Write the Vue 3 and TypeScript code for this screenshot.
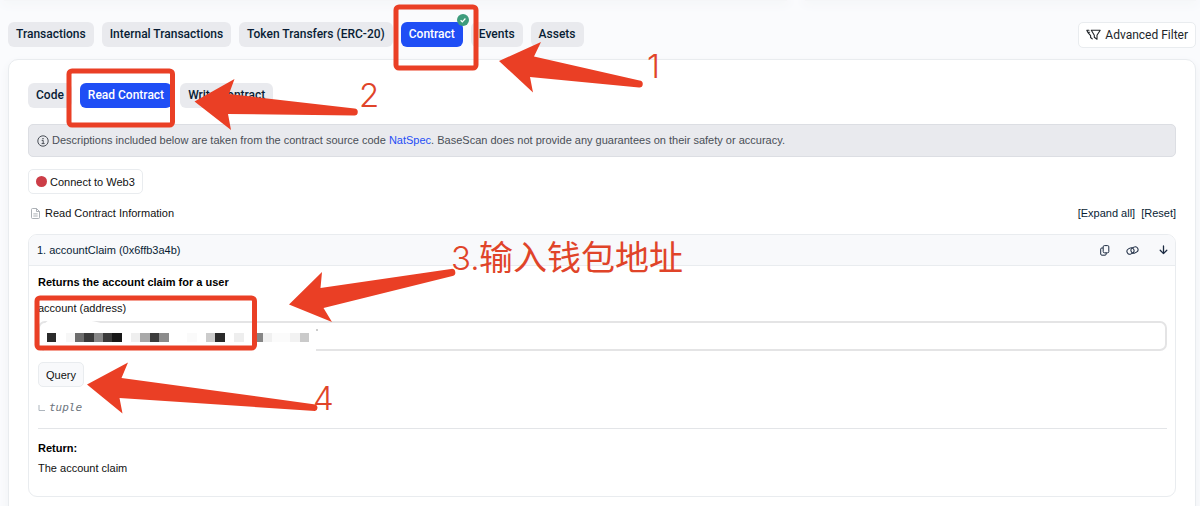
<script setup lang="ts">
import { ref } from 'vue'

interface Tab { label: string; active?: boolean; verified?: boolean }

const tabs: Tab[] = [
  { label: 'Transactions' },
  { label: 'Internal Transactions' },
  { label: 'Token Transfers (ERC-20)' },
  { label: 'Contract', active: true, verified: true },
  { label: 'Events' },
  { label: 'Assets' },
]
const subTabs: Tab[] = [
  { label: 'Code' },
  { label: 'Read Contract', active: true },
  { label: 'Write Contract' },
]
const account = ref('')

const mosaic: { x: number; w: number; c: string }[] = [
  { x: 47, w: 9, c: '#2b2b2b' },
  { x: 66, w: 9, c: '#f7f7f7' },
  { x: 75, w: 9, c: '#6c6c6c' },
  { x: 84, w: 10, c: '#3a3a3a' },
  { x: 94, w: 9, c: '#878787' },
  { x: 103, w: 9, c: '#3a3a3a' },
  { x: 112, w: 10, c: '#181818' },
  { x: 131, w: 9, c: '#efefef' },
  { x: 140, w: 10, c: '#a8a8a8' },
  { x: 150, w: 9, c: '#3c3c3c' },
  { x: 159, w: 10, c: '#8c8c8c' },
  { x: 187, w: 10, c: '#fafafa' },
  { x: 206, w: 9, c: '#cccccc' },
  { x: 215, w: 10, c: '#2b2b2b' },
  { x: 234, w: 10, c: '#eeeeee' },
  { x: 253, w: 10, c: '#858585' },
  { x: 263, w: 9, c: '#f0f0f0' },
  { x: 272, w: 18, c: '#fbfbfb' },
  { x: 290, w: 10, c: '#f2f2f2' },
  { x: 300, w: 9, c: '#cacaca' },
]
</script>

<template>
  <div class="page">
    <div class="above"><div class="sheet left"></div><div class="sheet right"></div></div>

    <header class="bar">
      <nav class="tabs">
        <button v-for="t in tabs" :key="t.label" type="button" class="tab" :class="{ active: t.active }">
          {{ t.label }}
          <svg v-if="t.verified" class="badge" viewBox="0 0 12 12" aria-hidden="true">
            <circle cx="6" cy="6" r="6" fill="#3d9c7c" />
            <path d="M3.6 6.2l1.7 1.6 3.1-3.3" fill="none" stroke="#fff" stroke-width="1.2" />
          </svg>
        </button>
      </nav>
      <button type="button" class="filter">
        <svg width="15" height="12" viewBox="0 0 15 12" fill="none" stroke="#212529" stroke-width="1.1" stroke-linejoin="round" stroke-linecap="round" aria-hidden="true">
          <path d="M5.300 1.300h8.900l-3.200 5v4L8.300 8.300V6.300z" />
          <path d="M3 1.300H.8l1 2h1.800M2 3.600l2.600 3v1.900l1.600 1.300" />
        </svg>
        Advanced Filter
      </button>
    </header>

    <main class="card">
      <nav class="tabs">
        <button v-for="t in subTabs" :key="t.label" type="button" class="tab" :class="{ active: t.active }">{{ t.label }}</button>
      </nav>

      <p class="notice">
        <svg width="12" height="12" viewBox="0 0 12 12" fill="none" stroke="#4a4f57" aria-hidden="true">
          <circle cx="6" cy="6" r="5.2" />
          <path d="M4.7 5.4h1.5v3M4.6 8.6h3" />
          <path d="M6 2.9v1.3" stroke-width="1.3" />
        </svg>
        <span>Descriptions included below are taken from the contract source code <a href="#">NatSpec</a>. BaseScan does not provide any guarantees on their safety or accuracy.</span>
      </p>

      <button type="button" class="connect"><i class="dot"></i>Connect to Web3</button>

      <div class="info">
        <h2>
          <svg width="9" height="11" viewBox="0 0 9 11" fill="none" stroke="#a3a8ae" stroke-width="0.9" aria-hidden="true">
            <path d="M1.5.5h4l3 3v6a1 1 0 0 1-1 1h-6a1 1 0 0 1-1-1v-8a1 1 0 0 1 1-1zM5.5.5v3h3M2.3 5.9h4.4M2.3 8h4.4" />
          </svg>
          Read Contract Information
        </h2>
        <div class="links"><a href="#">[Expand all]</a><a href="#">[Reset]</a></div>
      </div>

      <section class="method">
        <div class="method-head">
          <h3>1. accountClaim (0x6ffb3a4b)</h3>
          <div class="tools">
            <button type="button" aria-label="Copy">
              <svg width="10" height="11" viewBox="0 0 10 11" fill="none" stroke="#1b2a41" stroke-linejoin="round">
                <rect x="3.2" y=".6" width="5.6" height="7.2" rx="1.2" />
                <path d="M3 3H1.8A1.1 1.1 0 0 0 .7 4.100v4.900a1.200 1.200 0 0 0 1.200 1.200H5A1.200 1.200 0 0 0 6.200 9V8" />
              </svg>
            </button>
            <button type="button" aria-label="Permalink">
              <svg width="13" height="11" viewBox="0 0 13 11" fill="none" stroke="#1b2a41">
                <rect x=".9" y="3.200" width="7.200" height="5.600" rx="2.800" transform="rotate(-28 4.500 6)" />
                <rect x="4.900" y="2.200" width="7.200" height="5.600" rx="2.800" transform="rotate(-28 8.500 5)" />
              </svg>
            </button>
            <button type="button" class="toggle" aria-label="Toggle">
              <svg width="9" height="10" viewBox="0 0 9 10" fill="none" stroke="#1b2a41" stroke-width="1.3" stroke-linecap="round" stroke-linejoin="round">
                <path d="M4.500 1v7.500M1.200 5.300l3.300 3.300 3.300-3.300" />
              </svg>
            </button>
          </div>
        </div>
        <div class="method-body">
          <h4>Returns the account claim for a user</h4>
          <label for="account">account (address)</label>
          <input id="account" v-model="account" type="text" />
          <button type="button" class="query">Query</button>
          <div class="type">
            <svg width="8" height="7" viewBox="0 0 8 7" fill="none" stroke="#adb5bd" aria-hidden="true"><path d="M1 0v5.500h6" /></svg>
            <em>tuple</em>
          </div>
          <hr />
          <h4>Return:</h4>
          <p>The account claim</p>
        </div>
      </section>
    </main>

    <svg class="marks">
      <path d="M50 319Q76 316 105 324H316V354H44V324z" fill="#fff" />
      <rect v-for="m in mosaic" :key="m.x" :x="m.x" y="333" :width="m.w" height="9" :fill="m.c" />
      <path d="M316 330h2" stroke="#999" />
      <g class="frame">
        <rect x="396" y="7" width="80" height="61" rx="3" />
        <rect x="69" y="71" width="103.500" height="54" rx="3" />
        <rect x="37" y="298" width="217.500" height="50" rx="3" />
      </g>
      <g class="arrow">
        <path d="M499 61L541 42L534 56.500L639.500 80.500A3.500 3.500 0 0 1 639 87.500L530 77L533 92.500z" />
        <path d="M194.500 101.500L234.500 79L229 94L354.500 108.500A3.500 3.500 0 0 1 354 115.500L228 114L231 130z" />
        <path d="M289 304.500L322 272L320.500 288L451 269A3.500 3.500 0 0 1 452.500 276L323.500 308L332 322z" />
        <path d="M87 384.500L128 362.500L121.500 378L315.500 404.500A3.500 3.500 0 0 1 315 411L119.500 398L122.500 413.500z" />
      </g>
      <g class="step">
        <text x="647" y="78">1</text>
        <text x="359" y="107">2</text>
        <text x="451" y="270">3.</text>
        <text class="han" x="479" y="270">输入钱包地址</text>
        <text x="313" y="410">4</text>
      </g>
    </svg>
  </div>
</template>

<style>
html, body { background: #fafbfd; }
</style>

<style scoped>
.page {
  position: relative;
  overflow: hidden;
  font: 11px/16px "Liberation Sans", Arial, sans-serif;
  color: #111;
}
button, input { font: inherit; color: inherit; margin: 0; }
h2, h3, h4, p { margin: 0; font-size: 11px; line-height: 16px; font-weight: 400; }
svg { flex: none; }
a { text-decoration: none; }

.above { display: flex; gap: 18px; height: 22px; padding: 0 4px; box-sizing: border-box; }
.sheet { height: 1px; background: #f5f6f8; box-shadow: 0 0 12px 2px #eff1f4; }
.left { flex: 2; }
.right { flex: 1; }

.bar { display: flex; justify-content: space-between; padding: 0 4px 0 8px; }
.tabs { display: flex; gap: 8px; }
.tab {
  position: relative;
  height: 25px;
  padding: 0 8px;
  border: 0;
  border-radius: 6px;
  background: #e9eaee;
  color: #081d35;
  font: 500 12px/25px Roboto, sans-serif;
  white-space: nowrap;
}
.tab.active { background: #1f4ef5; color: #fff; }
.badge { position: absolute; width: 12px; height: 12px; top: -8px; right: -6px; }
.filter {
  display: flex;
  align-items: center;
  gap: 4px;
  height: 26px;
  padding: 0 7px;
  border: 1px solid #e9ecef;
  border-radius: 5px;
  background: #fff;
  color: #212529;
  font: 400 12px/24px Roboto, sans-serif;
}

.card {
  margin: 11px 4px 0 8px;
  padding: 23px 19px 24px;
  border: 1px solid #e9ecef;
  border-radius: 10px;
  background: #fff;
  box-shadow: 0 4px 10px #eff1f4;
}
.notice {
  display: flex;
  align-items: center;
  gap: 3px;
  margin: 16px 0 12px;
  padding: 8px;
  border: 1px solid #dcdee3;
  border-radius: 5px;
  background: #e9eaee;
  color: #4a4f57;
  line-height: 15px;
}
.notice a { color: #1f4ef5; }
.connect {
  display: flex;
  align-items: center;
  gap: 3px;
  height: 25px;
  padding: 0 7px;
  border: 1px solid #e9ecef;
  border-radius: 5px;
  background: #fff;
}
.dot { width: 11px; height: 11px; border-radius: 50%; background: #cc3d47; }
.info { display: flex; justify-content: space-between; margin: 11px 0 13px; }
.info h2 { display: flex; align-items: center; gap: 5px; padding-left: 3px; }
.links { display: flex; gap: 6px; }
.links a { color: #081d35; }

.method { border: 1px solid #e9ecef; border-radius: 9px; overflow: hidden; }
.method-head {
  display: flex;
  align-items: center;
  justify-content: space-between;
  height: 30px;
  padding: 0 7px 0 8px;
  border-bottom: 1px solid #e9ecef;
  background: #f8f9fb;
}
.method-head h3 { color: #081d35; }
.tools { display: flex; align-items: center; gap: 16px; }
.tools button { display: flex; padding: 0; border: 0; background: none; }
.tools .toggle { margin-left: 4px; }
.method-body { padding: 8px 8px 20px 9px; }
.method-body h4 { font-weight: 700; color: #000; }
label { display: block; margin: 10px 0 5px; }
input {
  display: block;
  box-sizing: border-box;
  width: 100%;
  height: 30px;
  padding: 0 8px;
  border: 2px solid #e4e4e5;
  border-radius: 7px;
  background: #fff;
}
.query {
  display: block;
  height: 25px;
  margin: 11px 0 13px;
  padding: 0 7px;
  border: 1px solid #e9ecef;
  border-radius: 5px;
  background: #f8f9fb;
}
.type { display: flex; align-items: center; gap: 3px; color: #6c757d; }
.type em { font: italic 11px/16px "DejaVu Sans Mono", monospace; }
hr { margin: 12px 0 11px; border: 0; border-top: 1px solid #e3e5e8; }
.method-body p { margin-top: 4px; }

.marks { position: absolute; top: 0; left: 0; width: 100%; height: 100%; pointer-events: none; }
.frame rect { fill: none; stroke: #ea3f25; stroke-width: 5; stroke-linejoin: round; }
.arrow path { fill: #ea3f25; }
.step text { fill: #e04429; font: 300 33px Inter, sans-serif; }
.step .han { font: 400 34px "Noto Sans CJK SC", sans-serif; }
</style>
